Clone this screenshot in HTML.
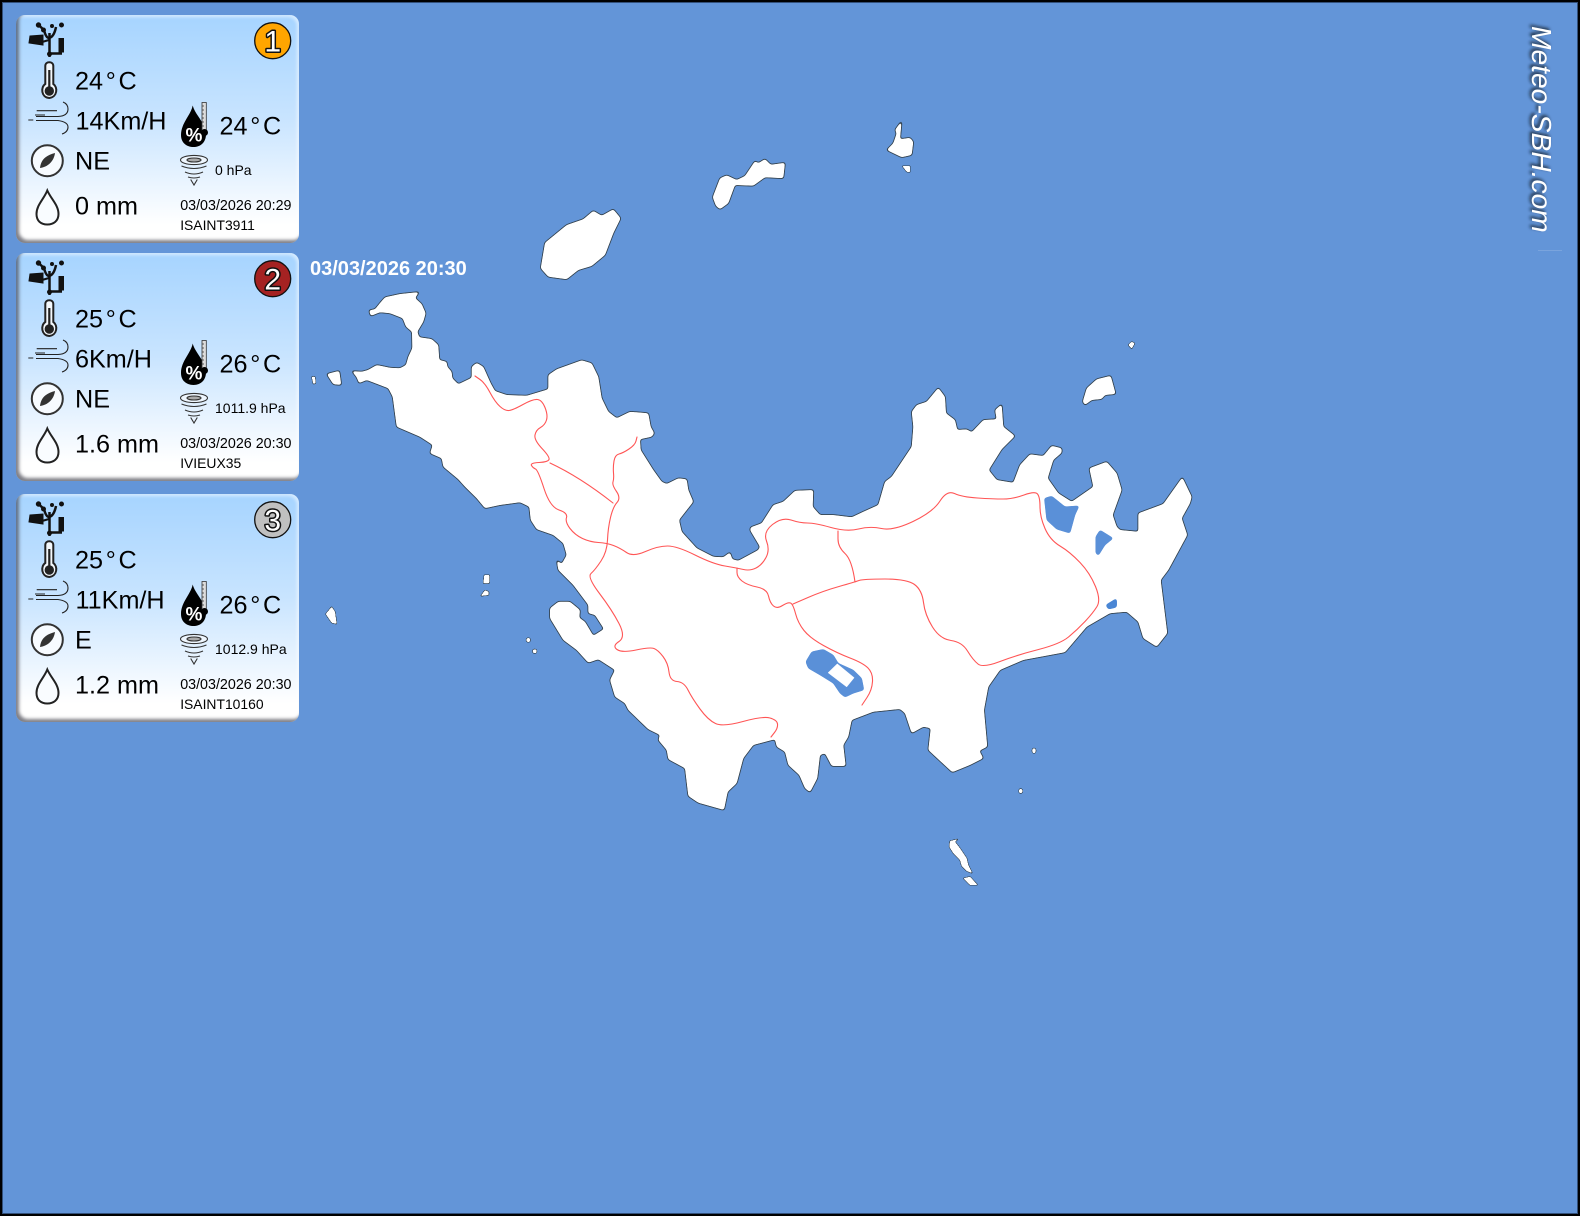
<!DOCTYPE html>
<html><head><meta charset="utf-8"><title>Meteo-SBH</title>
<style>
html,body{margin:0;padding:0;background:#000}
#p{position:relative;width:1576px;height:1212px;border:2px solid #000;background:#6395d8;overflow:hidden;box-shadow:inset 0 0 0 1px #33507a}
.c{position:absolute;left:14px;width:283px;height:228px;border-radius:9px;background:linear-gradient(#a6d4ff 0,#c8e4ff 45%,#fff 92%);box-shadow:inset 3px -3px 3px rgba(60,60,70,.65),inset -2px 2px 3px rgba(255,255,255,.55)}
svg{position:absolute;left:-2px;top:-2px}
text{font-family:"Liberation Sans",sans-serif;fill:#000}
.l{font-size:25.2px}.s{font-size:14px}.d{font-size:14.3px}.i{font-size:13.9px}
</style></head><body><div id="p">
<div class="c" style="top:13px"></div><div class="c" style="top:251px"></div><div class="c" style="top:492px"></div>
<svg width="1580" height="1216" viewBox="0 0 1580 1216">
<defs>
<filter id="b" x="-5%" y="-5%" width="110%" height="110%"><feGaussianBlur stdDeviation="0.25"/></filter>
<filter id="b2" x="-20%" y="-20%" width="140%" height="140%"><feGaussianBlur stdDeviation="1.6"/></filter>
<filter id="coast" filterUnits="userSpaceOnUse" x="300" y="100" width="920" height="800" color-interpolation-filters="sRGB">
<feGaussianBlur in="SourceAlpha" stdDeviation="1.3" result="bl"/>
<feComponentTransfer in="bl" result="w"><feFuncA type="linear" slope="8" intercept="-3.5"/></feComponentTransfer>
<feComponentTransfer in="bl" result="d"><feFuncA type="linear" slope="8" intercept="-1.5"/></feComponentTransfer>
<feFlood flood-color="#fff"/><feComposite in2="w" operator="in" result="W"/>
<feFlood flood-color="#33424e"/><feComposite in2="d" operator="in" result="D"/>
<feMerge><feMergeNode in="D"/><feMergeNode in="W"/></feMerge>
</filter>
<filter id="coast2" filterUnits="userSpaceOnUse" x="300" y="100" width="920" height="800" color-interpolation-filters="sRGB">
<feGaussianBlur in="SourceAlpha" stdDeviation="0.6" result="bl"/>
<feComponentTransfer in="bl" result="w"><feFuncA type="linear" slope="8" intercept="-3.5"/></feComponentTransfer>
<feComponentTransfer in="bl" result="d"><feFuncA type="linear" slope="8" intercept="-0.8"/></feComponentTransfer>
<feFlood flood-color="#fff"/><feComposite in2="w" operator="in" result="W"/>
<feFlood flood-color="#33424e"/><feComposite in2="d" operator="in" result="D"/>
<feMerge><feMergeNode in="D"/><feMergeNode in="W"/></feMerge>
</filter>
<filter id="pond" filterUnits="userSpaceOnUse" x="780" y="480" width="360" height="240" color-interpolation-filters="sRGB">
<feGaussianBlur stdDeviation="1.2" result="bl"/>
<feComponentTransfer in="bl"><feFuncA type="linear" slope="8" intercept="-2.9"/></feComponentTransfer>
</filter>
<g id="ic">
<g fill="#111" stroke="#111">
<circle cx="38.500" cy="25" r="2.200"/><circle cx="61.500" cy="25" r="2"/><circle cx="43.500" cy="30" r="2"/><circle cx="52" cy="26" r="1.500"/>
<path d="M38.500 25L44 30M44 30Q46 38 49 38Q54 37 56 27M49.500 33V57M49 53.500H62" fill="none" stroke-width="2.500"/>
<path d="M30 36L43 35V45L29 43Z" stroke-width="1"/><path d="M42 42L49 40" stroke-width="2"/>
<rect x="58.500" y="38" width="5.500" height="14.500" stroke="none"/><circle cx="49.500" cy="54" r="2"/>
</g>
<path d="M45.300 66C45.300 61 53.300 61 53.300 66V84C58 87 57.500 97 49.300 98C41 97.500 40.500 87 45.300 84Z" fill="#f4f8fc" stroke="#222" stroke-width="2"/>
<path d="M49.300 70V90" stroke="#222" stroke-width="2.200"/><circle cx="49.300" cy="91" r="4.700" fill="#222"/>
<g fill="none" stroke="#222" stroke-width="1.100">
<path d="M36.700 110.700H57M35 115H45M28.300 120H33.300"/>
<path d="M36 116.500H58Q68 116 68 109Q68 104 63 102"/><path d="M36 120.500H58Q68 122 68 127Q68 132 62 134"/>
</g>
<circle cx="47.300" cy="160.700" r="15.500" fill="#f7fbff" stroke="#333" stroke-width="2"/>
<path d="M40 168C41 158 48 155 55 153C54 161 48 167 40 168Z" fill="#333"/>
<path d="M47.300 190.500C44 199 36.500 205 36.500 214C36.500 221 41 224.500 47.300 224.500C53.500 224.500 58.500 221 58.500 214C58.500 205 51 199 47.300 190.500Z" fill="#f9fcff" stroke="#222" stroke-width="2"/>
<path d="M192.700 105.500C191 115 181 123 181 135C181 143 187 147 193.500 147C200 147 205.500 143 206 135C206 123 195 115 192.700 105.500Z" fill="#000"/>
<rect x="202" y="102.500" width="4.300" height="28" fill="#ddd" stroke="#333" stroke-width=".8"/><path d="M202 106H204M202 110H204M202 114H204M202 118H204M202 122H204M202 126H204" stroke="#333" stroke-width=".8"/>
<circle cx="204.500" cy="132.500" r="3.500" fill="#000"/>
<g fill="none" stroke="#333" stroke-width="1.100">
<ellipse cx="194" cy="160" rx="13.500" ry="4.600" fill="#eef6fe"/><ellipse cx="194" cy="160" rx="7" ry="2" fill="#aaa"/>
<path d="M181.500 166Q194 171 206.500 166M185 172Q194 176 203 172M188 177Q194 179 200 177M190.700 179.500L194 185L197.300 179.500"/>
</g>
</g>
</defs>

<g filter="url(#coast)" fill="#fff">
<path d="M351.700 371L361.700 371.700L368 370L376.700 365L390 367.700L400 368.300L406 365L408.300 356.700L412.300 348.300L412 331.700L406 326.700L402.700 318.300L390 313.300L380 312.300L370.700 316L369 310.300L375 309.300L380 303L385 297.300L400 294L419.300 292L415 298L421.700 304L425.700 313.300L423.300 321.700L417.300 331.700L419.300 337.300L431.700 339L438.300 345L439.300 360L446.700 361.700L447.300 366.700L451.700 371.700L452.300 378.300L458.300 384.300L471.700 377.700L471.700 366.700L476.700 362.700L483.300 366.700L490.700 383.300L495 391L506.700 395L526.700 395.700L548.300 389.300L548.300 375L556.700 369.300L581.700 360.300L591.700 363.300L598.300 376.700L601.700 398.300L608.300 411.700L616.700 418.300L630 411.700L648.300 413.300L650.700 426.700L654.300 433.300L651.700 436.700L640 439.300L640.700 450L653.300 470L661.700 481.700L666.700 484L678.300 478.300L686.700 479.300L688.300 490L693.300 501.700L679 520L681.700 531.700L696.700 548.300L713.300 556.700L723.300 557.300L730 552.300L732.300 559.300L738.300 560.700L758.300 550L760 546.700L750 530L750.700 527.300L761.700 523.300L773.300 505L783.300 501.700L795 490.700L813.300 490L812.700 506.700L820 515L833.300 515L851.700 517.300L863.300 511.700L878.300 505L885 481.700L891.700 476.700L911.700 446.700L913.300 426.700L911.700 411.700L916.700 405L926.700 401.700L938.300 387.700L945 396.700L946 413.300L955 420L957.300 430L966.700 429.300L971.700 432.300L983.300 420L996.700 419.300L995 410L1001.700 404.300L1003.300 426.700L1015 436L1001.700 449.300L988.700 470L996.700 480L1013.300 482.700L1020 465L1030 454.300L1043.300 456L1051.700 445.700L1061.700 448.300L1061.700 452.700L1053.300 460L1047.700 478.300L1058.300 493.300L1071.700 501.700L1093.300 486.700L1089.300 468.300L1106.700 461.700L1116.700 473.300L1121.700 490L1112.700 515L1116.700 526.700L1120 530L1138.300 531.700L1138.300 513.300L1163.300 504L1182.300 477.300L1191.700 496.700L1190 503.300L1181.700 518.300L1187.300 535L1168.300 570L1160.700 580L1167.300 633.300L1156.700 646.700L1143.300 638.300L1138.300 621.700L1126.700 611.700L1110 613.300L1086.700 626.700L1065 652.300L1023.300 660L1000 670L988.300 686.700L984 710L987.300 746.700L979.300 750.700L983.300 758.300L970 765L952.300 772.300L928.300 750L930.700 728.300L923.300 726.700L911.700 733.300L905 713.300L900 709L873.300 711.700L851.700 720L848.300 736.700L843.300 745L845.700 766L831.700 766L825 753.300L820 755L817.300 778.300L810 792.300L805 788.300L799.300 775L788.300 765L785 751.700L776.700 746.700L775 739.300L753.300 745L743.300 758.300L736.700 783.300L727.700 791.700L724 810L698.300 802.700L688.300 796L685 768.300L668.300 759.300L666.700 750L658.300 740L660 735L648.300 729.300L628.300 710L625 703.300L615 696.700L610 680L615 670L598.300 659.300L588.300 662.700L576.700 650L563.300 640L550 618.300L550 608.300L558.300 601.700L570 601.700L580 610L579.300 617.700L585 621.700L593.300 635.700L604 629L595 615L588.300 613.300L588.300 605L573.300 585L558.300 570L556.700 560L561.700 564L566.700 555L563.300 543.300L553.300 535L536.700 529.300L530.700 520L529.300 506.700L520 502.300L500 505L485 508.300L476.700 498.300L465 486.700L458.300 479.300L443.300 466.700L441.700 458.300L430 453.300L432.700 445L420 436.700L396.700 426.700L392.700 396.700L388.300 388.300L366.700 380L359 383.300L356.700 377.300Z"/>
<path d="M545 242.700L566.700 225L583.300 219.300L593.300 210.700L601.700 215.700L613.300 209.300L620.700 218.300L613.300 233.300L605 255L591.700 266L578.300 270L566.700 279.300L548.300 276.700L540.700 268.300Z"/>
<path d="M712.700 197.300L720 178.300L726.700 175.300L736.700 180L745 176L755 161L758.300 163.300L765 159L770.700 164.700L785 162.700L783.300 178.300L765 177.300L753.300 185.700L735 185L728.300 203.300L720 209.300L716 206Z"/>
<path d="M901.700 120.700L900 139.300L910 137.700L913.300 141.700L911.700 155L901.700 157.300L886.700 150L893.300 143.300L896.700 133.300L895 130Z"/>
<path d="M1082.700 401.700L1086.700 388.300L1096.700 379.300L1110.700 375.700L1115.700 394L1105 395L1101.700 399L1091.700 400L1085 405Z"/>
<path d="M326.700 374L339.300 370.700L341.300 385L333.300 384.300Z"/>
</g>
<g filter="url(#coast2)" fill="#fff">
<path d="M902.300 166L910 166L910 172.300L906.700 171.700Z"/>
<path d="M1128.300 345L1131.700 341.700L1134.700 343.300L1131.700 348.700Z"/>
<path d="M311.700 376.700L315 376.700L315.700 383.300L313.300 384Z"/>
<path d="M483.300 583.300L484.300 575L489.300 575L489.300 583.300Z"/>
<path d="M480.700 596L485 590.300L488.700 591.700L488.700 595Z"/>
<path d="M325.700 614L331.700 606.700L335 611.700L336.700 624L331.700 622.700Z"/>
<circle cx="528.300" cy="640" r="2"/><circle cx="534.700" cy="651.300" r="2"/>
<ellipse cx="1034" cy="750.700" rx="1.800" ry="2.500"/><ellipse cx="1020.700" cy="791" rx="1.800" ry="2.300"/>
<path d="M949.300 846.700L950 841L958.300 839L955 841.700L960 848.300L966.700 858.300L968.300 865L972.300 873.300L966.700 871L961.700 866L960 860L953.300 853.300Z"/>
<path d="M963.300 878.300L970 876.700L977.700 885L970 885Z"/>
</g>
<g filter="url(#pond)" fill="#5a90d8">
<path d="M1044.300 498.300L1051.700 496L1065 506.700L1079.300 505.700L1075 515L1070 533.300L1056.700 529.300L1046.700 520Z"/>
<path d="M1095.700 536.700L1100 530L1113.300 538.300L1105 545L1098.300 555.700L1095.700 553Z"/>
<path d="M1105.700 605L1116.700 598.300L1116.700 607.300L1108.300 609.300Z" fill="#4a86d4"/>
<path d="M805.700 661.700L811.700 651.700L823.300 649.300L833.300 655L838.300 663.300L853.300 670L861.700 678.300L864 690L853.300 693.300L845 697.300L840 693.300L833.300 683.300L820 675L808.300 668.300Z"/>
</g>
<path d="M828.300 672.700L837.300 664L854 677.700L846.700 686.700Z" fill="#fff" stroke="#fff" stroke-width=".6" stroke-linejoin="round"/>
<g fill="none" stroke="#ff5555" stroke-width="1.100" stroke-linejoin="round" stroke-linecap="round" filter="url(#b)">
<path d="M475 376L480 379.500Q485 383 490 392.500Q495 402 500 406.500Q505 411 509 410.500Q513 410 523 404.500Q533 399 537.500 399.500Q542 400 545 407.500Q548 415 546.500 420Q545 425 540.500 427.500Q536 430 535 435Q534 440 542 448.500Q550 457 549 459.500Q548 462 539 462.500Q530 463 531.500 465.500Q533 468 535.500 469Q538 470 544 488.500Q550 507 559 510Q568 513 566.500 517.500Q565 522 570 528.500Q575 535 582.500 538.500Q590 542 598.500 542.500Q607 543 613.500 545.500Q620 548 626.500 552.500Q633 557 645.500 551.500Q658 546 667.500 546Q677 546 695 555Q713 564 725 566Q737 568 743.500 569.500Q750 571 756 568Q762 565 766 557.500Q770 550 766.500 541Q763 532 772.500 524.500Q782 517 791 520Q800 523 807.500 523Q815 523 831 527.500Q847 532 858.500 529Q870 526 881.500 528.500Q893 531 913 521.500Q933 512 940 501Q947 490 954.500 493.500Q962 497 977.500 498Q993 499 1003 499Q1013 499 1024 495Q1035 491 1037.500 494Q1040 497 1040 507Q1040 517 1045 528.500Q1050 540 1060 546Q1070 552 1080 562.500Q1090 573 1095.500 586.500Q1101 600 1097 606.500Q1093 613 1085 621.500Q1077 630 1068.500 637Q1060 644 1038.500 649.500Q1017 655 1000 661.500Q983 668 978 664Q973 660 967.500 651Q962 642 951 640.500Q940 639 932.500 627Q925 615 923.500 602.500Q922 590 914.500 584.500Q907 579 885 579Q863 579 859 580.500Q855 582 839 586.500Q823 591 808 597.500L793 604"/>
<path d="M838 531L838 539Q838 547 845 553.500Q852 560 855 582"/>
<path d="M737 568L737 572.500Q737 577 742 581Q747 585 757 587Q767 589 768.500 596Q770 603 773.500 606Q777 609 782.500 605.500Q788 602 790.500 603Q793 604 795.500 613.500Q798 623 804 630.500Q810 638 823.500 645.500Q837 653 850 658Q863 663 868 668Q873 673 872.500 681.500Q872 690 867 697.500L862 705"/>
<path d="M637 437L636 441Q635 445 629 449Q623 453 619 454Q615 455 614 461Q613 467 613.500 473Q614 479 613 482Q612 485 616.500 491.500Q621 498 617 502.500Q613 507 610.500 517.500Q608 528 607.500 540Q607 552 601 561Q595 570 591 573.500Q587 577 599.500 593.500Q612 610 619 623.500Q626 637 619 641.500Q612 646 617 649.500Q622 653 636 650Q650 647 654 648.500Q658 650 663 656.500Q668 663 669 672Q670 681 677 681.500Q684 682 688 690Q692 698 700 709Q708 720 715.500 723.500Q723 727 743 721.500Q763 716 770 718Q777 720 777.500 724Q778 728 774.500 732.500L771 737"/>
<path d="M550 463Q580 477 613 503"/>
</g>

<use href="#ic"/><use href="#ic" y="238"/><use href="#ic" y="479"/>

<g>
<text class="l" x="75" y="89.600">24<tspan dx="2.700">°</tspan><tspan dx="2.700">C</tspan></text>
<text class="l" x="75.500" y="129.600">14Km/H</text>
<text class="l" x="75" y="169.600">NE</text>
<text class="l" x="75" y="214.600">0 mm</text>
<text class="l" x="219.500" y="134.600">24<tspan dx="2.700">°</tspan><tspan dx="2.700">C</tspan></text>
<text class="s" x="215" y="175">0 hPa</text>
<text class="d" x="180.200" y="210">03/03/2026 20:29</text>
<text class="i" x="180.200" y="230">ISAINT3911</text>
</g>
<g transform="translate(0,238)">
<text class="l" x="75" y="89.600">25<tspan dx="2.700">°</tspan><tspan dx="2.700">C</tspan></text>
<text class="l" x="75" y="129.600">6Km/H</text>
<text class="l" x="75" y="169.600">NE</text>
<text class="l" x="75" y="214.600">1.6 mm</text>
<text class="l" x="219.500" y="134.600">26<tspan dx="2.700">°</tspan><tspan dx="2.700">C</tspan></text>
<text class="s" x="215" y="175">1011.9 hPa</text>
<text class="d" x="180.200" y="210">03/03/2026 20:30</text>
<text class="i" x="180.200" y="230">IVIEUX35</text>
</g>
<g transform="translate(0,479)">
<text class="l" x="75" y="89.600">25<tspan dx="2.700">°</tspan><tspan dx="2.700">C</tspan></text>
<text class="l" x="75.500" y="129.600">11Km/H</text>
<text class="l" x="75" y="169.600">E</text>
<text class="l" x="75" y="214.600">1.2 mm</text>
<text class="l" x="219.500" y="134.600">26<tspan dx="2.700">°</tspan><tspan dx="2.700">C</tspan></text>
<text class="s" x="215" y="175">1012.9 hPa</text>
<text class="d" x="180.200" y="210">03/03/2026 20:30</text>
<text class="i" x="180.200" y="230">ISAINT10160</text>
</g>
<g font-weight="bold" font-size="19" text-anchor="middle">
<text x="194" y="141.500" style="fill:#fff">%</text>
<text x="194" y="379.500" style="fill:#fff">%</text>
<text x="194" y="620.500" style="fill:#fff">%</text>
</g>

<g stroke="#111" stroke-width="1.300"><circle cx="272.700" cy="40.700" r="18" fill="#ffa500"/><circle cx="272.700" cy="278.700" r="18" fill="#a52222"/><circle cx="272.700" cy="519.700" r="18" fill="#c0c0c0"/></g>
<g font-size="30" text-anchor="middle" stroke="#111" stroke-width="3" stroke-linejoin="round">
<text x="272.700" y="51.500" style="fill:#fff;paint-order:stroke">1</text>
<text x="272.700" y="289.500" style="fill:#fff;paint-order:stroke">2</text>
<text x="272.700" y="530.500" style="fill:#fff;paint-order:stroke">3</text>
</g>

<text x="310" y="275" font-weight="bold" font-size="20" style="fill:#fff">03/03/2026 20:30</text>

<text transform="translate(1530,24) rotate(90)" font-size="28.200" font-style="italic" filter="url(#b2)" style="fill:#16202e">Meteo-SBH.com</text>
<text transform="translate(1532,26) rotate(90)" font-size="28.200" font-style="italic" style="fill:#fff">Meteo-SBH.com</text>
<path d="M1538 250.500H1562" stroke="#fff" stroke-opacity=".15"/>
</svg>
</div></body></html>
